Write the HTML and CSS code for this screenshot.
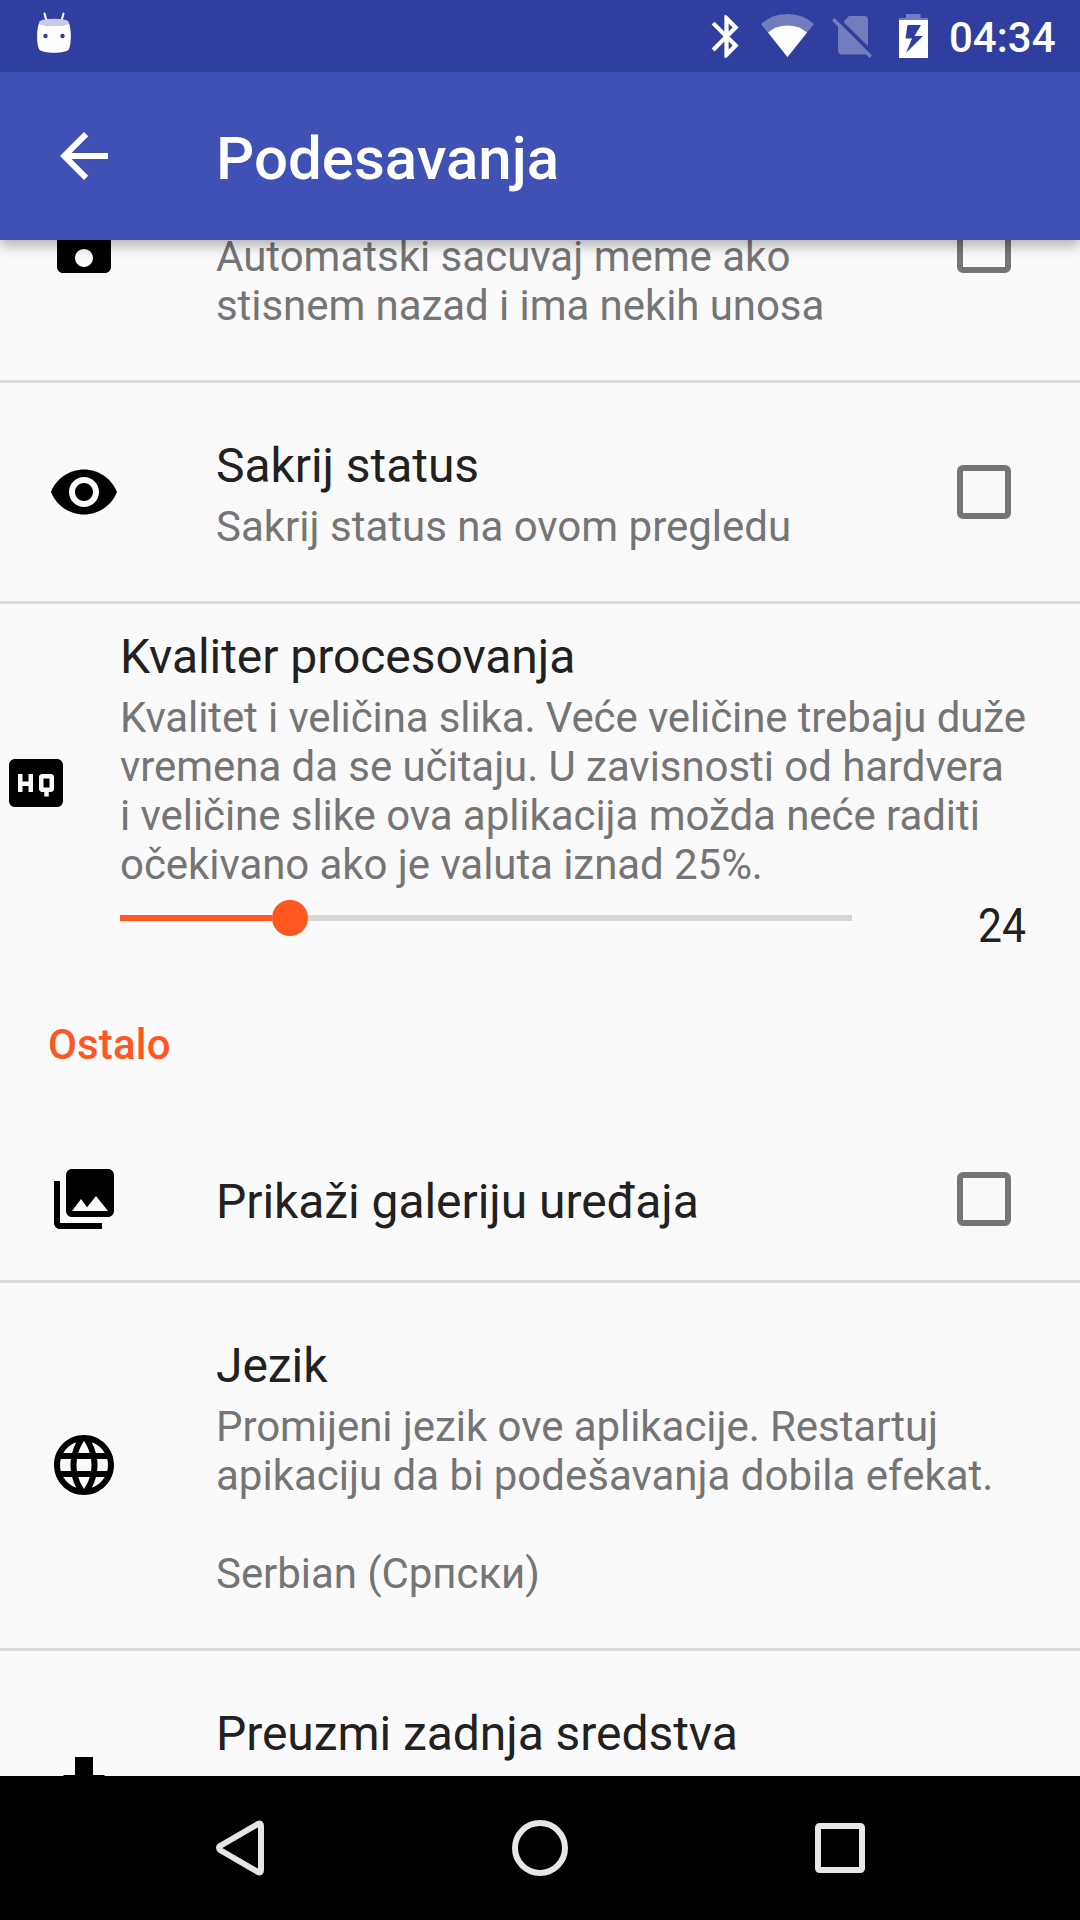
FILE: index.html
```html
<!DOCTYPE html>
<html lang="sr">
<head>
<meta charset="utf-8">
<title>Podesavanja</title>
<link rel="stylesheet" href="styles.css">
</head>
<body>
<div class="screen">
  <header class="status-bar">
    <svg class="robot" width="36" height="72" viewBox="36 0 36 72">
      <path d="M44.5 13.5L46.5 21M63.500 13.500L61.500 21" stroke="#fff" stroke-width="2" stroke-linecap="round"/>
      <path d="M39 23C42 27 66 27 69 23C71.500 30 71.500 43 69 49C67 54 41 54 39 49C36.500 43 36.500 30 39 23Z" fill="#fff"/>
      <ellipse cx="54" cy="22.500" rx="15" ry="3.800" fill="#c9cce6"/>
      <circle cx="45.500" cy="36" r="2.200" fill="#303f9f"/>
      <circle cx="62.500" cy="36" r="2.200" fill="#303f9f"/>
    </svg>
    <div class="status-icons">
      <svg class="bluetooth" width="51" height="51" viewBox="0 0 24 24"><path fill="#fff" d="M17.710 7.710L12 2h-1v7.590L6.410 5 5 6.410 10.590 12 5 17.590 6.410 19 11 14.410V22h1l5.710-5.710-4.300-4.290 4.300-4.290zM13 5.830l1.880 1.880L13 9.590V5.830zm1.880 10.460L13 18.170v-3.760l1.880 1.880z"/></svg>
      <svg class="wifi" width="54" height="72" viewBox="760 0 54 72">
        <path fill="#fff" fill-opacity=".32" d="M787.500 57L761 24Q772 14 787.500 14T814 24Z"/>
        <path fill="#fff" d="M787.500 57L768 32.500Q776 25.500 787.500 25.500T807 32.500Z"/>
      </svg>
      <svg class="signal" width="42" height="72" viewBox="831 0 42 72">
        <path fill="#fff" fill-opacity=".32" d="M843.500 22L849 16H864Q868 16 868 20V46ZM834.500 18L872 55.500L869.500 58L866 54.500H842Q838 54.500 838 50.500V26.500L832 20.500Z"/>
      </svg>
      <svg class="battery" width="30" height="72" viewBox="899 0 30 72">
        <path fill="#fff" fill-opacity=".32" d="M906 14H920.500V18H928V20H899V18H906Z"/>
        <path fill="#fff" fill-rule="evenodd" d="M899 20H928V58H899ZM907.500 25L905.500 38.500H912L906 53L923 36H914.500L921 25Z"/>
      </svg>
      <span class="clock">04:34</span>
    </div>
  </header>

  <div class="toolbar">
    <svg class="back" width="72" height="72" viewBox="0 0 24 24"><path fill="#fff" d="M20 11H7.830l5.590-5.590L12 4l-8 8 8 8 1.410-1.410L7.830 13H20v-2z"/></svg>
    <h1 class="page-title">Podesavanja</h1>
  </div>

  <main class="settings">
    <section class="row row-scrolled">
      <svg class="icon" viewBox="0 0 24 24"><path d="M17 3H5c-1.110 0-2 .9-2 2v14c0 1.100.89 2 2 2h14c1.100 0 2-.9 2-2V7l-4-4zm-5 16c-1.660 0-3-1.340-3-3s1.340-3 3-3 3 1.340 3 3-1.340 3-3 3zm3-10H5V5h10v4z"/></svg>
      <div class="text">
        <p class="summary"><span class="loose">Automatski sacuvaj meme ako</span><br>stisnem nazad i ima nekih unosa</p>
      </div>
      <span class="checkbox"></span>
    </section>

    <section class="row">
      <svg class="icon" viewBox="0 0 24 24"><path d="M12 4.500C7 4.500 2.730 7.610 1 12c1.730 4.390 6 7.500 11 7.500s9.270-3.110 11-7.500c-1.730-4.390-6-7.500-11-7.500zM12 17c-2.760 0-5-2.240-5-5s2.240-5 5-5 5 2.240 5 5-2.240 5-5 5zm0-8c-1.660 0-3 1.340-3 3s1.340 3 3 3 3-1.340 3-3-1.340-3-3-3z"/></svg>
      <div class="text">
        <h2 class="title">Sakrij status</h2>
        <p class="summary loose">Sakrij status na ovom pregledu</p>
      </div>
      <span class="checkbox"></span>
    </section>

    <section class="slider-row">
      <svg class="icon" viewBox="0 0 24 24"><path d="M19 4H5c-1.110 0-2 .9-2 2v12c0 1.100.89 2 2 2h14c1.100 0 2-.9 2-2V6c0-1.100-.9-2-2-2zm-8 11H9.500v-2h-2v2H6V9h1.500v2.500h2V9H11v6zm7-1c0 .55-.45 1-1 1h-.75v1.500h-1.500V15H14c-.55 0-1-.45-1-1v-4c0-.55.45-1 1-1h3c.55 0 1 .45 1 1v4zm-3.500-.5h2v-3h-2v3z"/></svg>
      <div class="slider-body">
        <h2 class="title">Kvaliter procesovanja</h2>
        <p class="summary"><span class="tight">Kvalitet i veličina slika. Veće veličine trebaju duže</span><br>vremena da se učitaju. U zavisnosti od hardvera<br>i veličine slike ova aplikacija možda neće raditi<br>očekivano ako je valuta iznad 25%.</p>
        <div class="slider-line">
          <div class="slider"><span class="fill"></span><span class="thumb"></span><span class="track"></span></div>
          <span class="value">24</span>
        </div>
      </div>
    </section>

    <h3 class="category">Ostalo</h3>

    <section class="row row-single">
      <svg class="icon" viewBox="0 0 24 24"><path d="M22 16V4c0-1.100-.9-2-2-2H8c-1.100 0-2 .9-2 2v12c0 1.100.9 2 2 2h12c1.100 0 2-.9 2-2zm-11-4l2.030 2.710L16 11l4 5H8l3-4zM2 6v14c0 1.100.9 2 2 2h14v-2H4V6H2z"/></svg>
      <div class="text"><h2 class="title">Prikaži galeriju uređaja</h2></div>
      <span class="checkbox"></span>
    </section>

    <section class="row row-language">
      <svg class="icon" viewBox="0 0 24 24"><path d="M11.990 2C6.470 2 2 6.480 2 12s4.470 10 9.990 10C17.520 22 22 17.520 22 12S17.520 2 11.990 2zm6.930 6h-2.950c-.32-1.250-.78-2.450-1.380-3.560 1.840.63 3.370 1.910 4.330 3.560zM12 4.040c.83 1.200 1.480 2.530 1.910 3.960h-3.820c.43-1.430 1.080-2.760 1.910-3.960zM4.260 14C4.100 13.360 4 12.690 4 12s.1-1.360.26-2h3.380c-.08.66-.14 1.320-.14 2 0 .68.06 1.340.14 2H4.260zm.82 2h2.950c.32 1.250.78 2.450 1.380 3.560-1.840-.63-3.370-1.900-4.330-3.560zm2.950-8H5.080c.96-1.660 2.490-2.930 4.330-3.560C8.810 5.550 8.350 6.750 8.030 8zM12 19.960c-.83-1.200-1.480-2.530-1.910-3.960h3.820c-.43 1.430-1.080 2.760-1.910 3.960zM14.340 14H9.660c-.09-.66-.16-1.320-.16-2 0-.68.07-1.350.16-2h4.680c.09.65.16 1.320.16 2 0 .68-.07 1.340-.16 2zm.25 5.560c.6-1.110 1.060-2.310 1.380-3.560h2.950c-.96 1.650-2.490 2.930-4.330 3.560zM16.360 14c.08-.66.14-1.320.14-2 0-.68-.06-1.340-.14-2h3.380c.16.64.26 1.310.26 2s-.1 1.360-.26 2h-3.380z"/></svg>
      <div class="text">
        <h2 class="title">Jezik</h2>
        <p class="summary">Promijeni jezik ove aplikacije. Restartuj<br><span class="loose">apikaciju da bi podešavanja dobila efekat.</span><br><br>Serbian (Српски)</p>
      </div>
    </section>

    <section class="row row-last">
      <svg class="icon" viewBox="0 0 24 24"><path d="M19 9h-4V3H9v6H5l7 7 7-7zM5 18v2h14v-2H5z"/></svg>
      <div class="text"><h2 class="title">Preuzmi zadnja sredstva</h2></div>
    </section>
  </main>

  <nav class="nav-bar">
    <svg width="300" height="144" viewBox="90 0 300 144"><path d="M219 71.500Q219 70.500 220 70L258 48Q261 46.500 261 50V94Q261 97.500 258 96L220 74Q219 73 219 71.500Z" fill="none" stroke="#e6e6e6" stroke-width="6" stroke-linejoin="round"/></svg>
    <svg width="300" height="144" viewBox="390 0 300 144"><circle cx="540" cy="72" r="25" fill="none" stroke="#e6e6e6" stroke-width="6"/></svg>
    <svg width="300" height="144" viewBox="690 0 300 144"><rect x="818" y="50" width="44" height="44" rx="1.500" fill="none" stroke="#e6e6e6" stroke-width="6"/></svg>
  </nav>
</div>
</body>
</html>
```
FILE: styles.css
```css
* {
  box-sizing: border-box;
}

body,
h1,
h2,
h3,
p {
  margin: 0;
  font-weight: 400;
}

body {
  font-family: Roboto, "Noto Sans", sans-serif;
  background: #fafafa;
}

svg {
  display: block;
  flex: none;
}

.screen {
  display: flex;
  flex-direction: column;
  width: 1080px;
  height: 1920px;
  overflow: hidden;
}

.status-bar {
  display: flex;
  flex: none;
  justify-content: space-between;
  height: 72px;
  padding: 0 24px 0 36px;
  background: #303f9f;
}

.status-icons {
  display: flex;
  align-items: center;
}

.bluetooth {
  margin-right: 8px;
}

.wifi {
  margin-right: 17px;
}

.signal {
  margin-right: 26px;
}

.battery {
  margin-right: 20px;
}

.clock {
  width: 107px;
  padding-top: 2px;
  color: #fff;
  font-size: 42px;
  font-weight: 500;
  line-height: 49px;
  white-space: nowrap;
}

.toolbar {
  z-index: 1;
  display: flex;
  flex: none;
  align-items: center;
  gap: 96px;
  height: 168px;
  padding-left: 48px;
  background: #3f51b5;
  box-shadow: 0 6px 12px rgba(0, 0, 0, .29);
}

.page-title {
  padding-top: 6px;
  color: #fff;
  font-size: 60px;
  font-weight: 500;
  line-height: 70px;
}

.settings {
  flex: 1;
  min-height: 0;
  overflow: hidden;
}

.row {
  display: flex;
  align-items: center;
  padding: 54px 69px 50px 48px;
  border-bottom: 3px solid #dadada;
}

.row-scrolled {
  height: 270px;
  margin-top: -127px;
}

.row-scrolled .text {
  padding-top: 65px;
}

.row-single {
  height: 165px;
  padding-top: 0;
  padding-bottom: 0;
}

.row-single .text {
  padding-top: 4px;
}

.row-last {
  height: 269px;
}

.row-last .text {
  align-self: flex-start;
}

.icon {
  width: 72px;
  height: 72px;
  margin-right: 96px;
}

.row .icon {
  margin-top: -2px;
  margin-bottom: 2px;
}

.row-scrolled .icon,
.row-language .icon {
  margin-top: -3px;
  margin-bottom: 3px;
}

.row-single .icon {
  margin-top: 0;
  margin-bottom: 0;
}

.text {
  flex: 1;
}

.title {
  color: #212121;
  font-size: 48px;
  line-height: 57px;
  letter-spacing: -.06px;
  white-space: nowrap;
}

.summary {
  color: #757575;
  font-size: 42px;
  line-height: 49px;
  letter-spacing: -.06px;
  white-space: nowrap;
}

.tight {
  letter-spacing: -.115px;
}

.loose {
  letter-spacing: 0;
}

.title + .summary {
  margin-top: 8px;
}

.checkbox {
  flex: none;
  width: 54px;
  height: 54px;
  margin-top: -2px;
  margin-bottom: 2px;
  border: 6px solid #757575;
  border-radius: 6px;
}

.row-scrolled .checkbox {
  margin-top: -3px;
  margin-bottom: 3px;
}

.row-single .checkbox {
  margin: 0;
}

.slider-row {
  display: flex;
  align-items: center;
  height: 358px;
}

.slider-row .icon {
  margin-right: 48px;
}

.slider-body {
  align-self: flex-start;
  flex: 1;
  padding-top: 24px;
}

.slider-line {
  display: flex;
  align-items: flex-start;
  justify-content: space-between;
  padding: 8px 54px 0 0;
}

.slider {
  display: flex;
  align-items: center;
  width: 732px;
  height: 42px;
}

.fill {
  width: 152px;
  height: 6px;
  background: #ff5722;
}

.thumb {
  width: 36px;
  height: 36px;
  border-radius: 50%;
  background: #ff5722;
}

.track {
  flex: 1;
  height: 6px;
  background: #d6d6d6;
}

.value {
  color: #212121;
  font-size: 48px;
  line-height: 57px;
  transform: scaleX(.89);
  transform-origin: right;
}

.category {
  height: 156px;
  padding: 58px 0 0 48px;
  color: #ff5722;
  font-size: 42px;
  font-weight: 500;
  line-height: 49px;
  letter-spacing: .15px;
}

.nav-bar {
  display: flex;
  flex: none;
  justify-content: center;
  height: 144px;
  background: #000;
}
```
